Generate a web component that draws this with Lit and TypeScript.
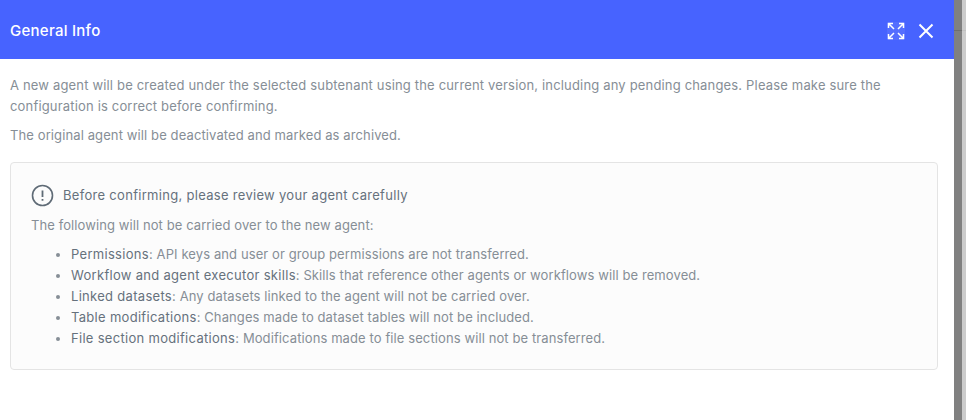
import { LitElement, html, css, svg } from "lit";
import { customElement } from "lit/decorators.js";

const ITEMS: [string, string][] = [
  ["Permissions", "API keys and user or group permissions are not transferred."],
  ["Workflow and agent executor skills", "Skills that reference other agents or workflows will be removed."],
  ["Linked datasets", "Any datasets linked to the agent will not be carried over."],
  ["Table modifications", "Changes made to dataset tables will not be included."],
  ["File section modifications", "Modifications made to file sections will not be transferred."],
];

const expandIcon = svg`
  <rect x="0" y="0" width="18" height="18" rx="2" fill="#fff" fill-opacity="0.07" />
  <g fill="none" stroke="#fff" stroke-width="1.5">
    <path d="M1.5 6V1.5H6M1.5 1.5l5.5 5.5" />
    <path d="M16.5 6V1.5H12M16.5 1.5L11 7" />
    <path d="M1.5 12v4.5H6M1.5 16.5L7 11" />
    <path d="M16.5 12v4.5H12M16.5 16.5L11 11" />
  </g>`;

@customElement("app-root")
export class AppRoot extends LitElement {
  static styles = css`
    :host {
      display: flex;
      height: 420px;
      width: 966px;
      overflow: hidden;
      font-family: "Inter", "Noto Sans", sans-serif;
      font-size: 13px;
      letter-spacing: 0.17px;
      color: #868e96;
      background: #fff;
    }

    .modal {
      width: 954px;
      flex: none;
      background: #fff;
    }

    .backdrop {
      width: 8px;
      flex: none;
      background: #808080;
    }

    .backdrop .rule {
      height: 1px;
      margin-top: 30px;
      background: #6e6e6e;
    }

    .track {
      flex: 1;
      background: #cccccc;
    }

    .track .rule {
      height: 1px;
      margin-top: 30px;
      background: #c2c2c2;
    }

    .header {
      height: 59px;
      box-sizing: border-box;
      display: flex;
      align-items: center;
      justify-content: space-between;
      padding: 2px 20px 0 10px;
      background: #4763ff;
      color: #fff;
    }

    .title {
      font-size: 15px;
      font-weight: 500;
      letter-spacing: 0.26px;
    }

    .actions {
      display: flex;
      align-items: center;
      gap: 13px;
      margin-top: 1px;
    }

    .actions svg {
      display: block;
    }

    .body {
      padding: 16px 16px 0 10px;
    }

    p {
      margin: 0;
      line-height: 21px;
    }

    .body > p + p {
      margin-top: 8px;
      letter-spacing: 0.11px;
    }

    .notice {
      margin-top: 16px;
      height: 208px;
      box-sizing: border-box;
      padding: 20px 20px;
      background: #fcfcfc;
      border: 1px solid #e4e4e4;
      border-radius: 4px;
    }

    .notice-head {
      display: flex;
      align-items: center;
      gap: 9px;
      color: #66717c;
      line-height: 24px;
      letter-spacing: 0.3px;
    }

    .notice-head svg {
      display: block;
    }

    .lead {
      margin-top: 8px;
      letter-spacing: 0.09px;
    }

    ul {
      margin: 8px 0 0;
      padding: 0 0 0 40px;
      line-height: 21px;
      letter-spacing: 0.1px;
    }

    b {
      font-weight: 400;
      color: #66717c;
      letter-spacing: 0.3px;
    }
  `;

  render() {
    return html`
      <div class="modal">
        <div class="header">
          <span class="title">General Info</span>
          <div class="actions">
            <svg width="18" height="18" viewBox="0 0 18 18">${expandIcon}</svg>
            <svg width="16" height="16" viewBox="0 0 16 16">
              <path d="M1.5 1.5l13 13M14.5 1.5l-13 13" fill="none" stroke="#fff" stroke-width="2" />
            </svg>
          </div>
        </div>
        <div class="body">
          <p>
            A new agent will be created under the selected subtenant using the current version, including any pending
            changes. Please make sure the configuration is correct before confirming.
          </p>
          <p>The original agent will be deactivated and marked as archived.</p>
          <div class="notice">
            <div class="notice-head">
              <svg width="23" height="23" viewBox="0 0 23 23">
                <circle cx="11.5" cy="11.5" r="10" fill="none" stroke="#5f6b76" stroke-width="1.6" />
                <path d="M11.5 6.5v6.5M11.5 15v1.8" fill="none" stroke="#5f6b76" stroke-width="1.8" />
              </svg>
              <span>Before confirming, please review your agent carefully</span>
            </div>
            <p class="lead">The following will not be carried over to the new agent:</p>
            <ul>
              ${ITEMS.map(([name, text]) => html`<li><b>${name}</b>: ${text}</li>`)}
            </ul>
          </div>
        </div>
      </div>
      <div class="backdrop"><div class="rule"></div></div>
      <div class="track"><div class="rule"></div></div>
    `;
  }
}
